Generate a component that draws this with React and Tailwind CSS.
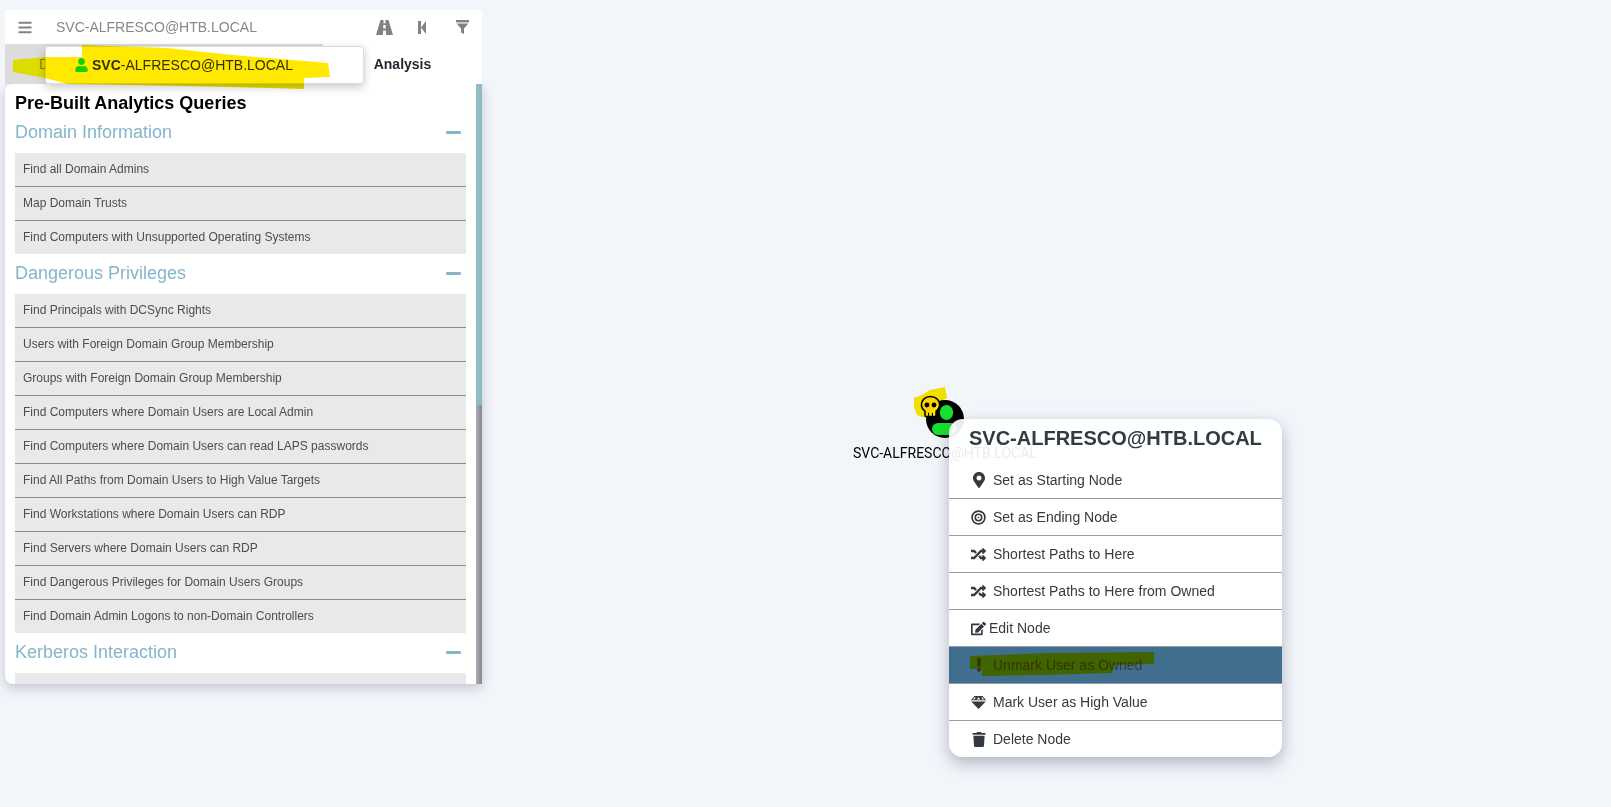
import {
  FaBars, FaUser, FaMapMarkerAlt,
  FaRandom, FaEdit, FaExclamation, FaTrash, FaMinus,
} from 'react-icons/fa';

const sections = [
  {
    title: 'Domain Information',
    rows: ['Find all Domain Admins', 'Map Domain Trusts', 'Find Computers with Unsupported Operating Systems'],
  },
  {
    title: 'Dangerous Privileges',
    rows: [
      'Find Principals with DCSync Rights',
      'Users with Foreign Domain Group Membership',
      'Groups with Foreign Domain Group Membership',
      'Find Computers where Domain Users are Local Admin',
      'Find Computers where Domain Users can read LAPS passwords',
      'Find All Paths from Domain Users to High Value Targets',
      'Find Workstations where Domain Users can RDP',
      'Find Servers where Domain Users can RDP',
      'Find Dangerous Privileges for Domain Users Groups',
      'Find Domain Admin Logons to non-Domain Controllers',
    ],
  },
  {
    title: 'Kerberos Interaction',
    rows: [''],
  },
];

const RoadIcon = ({ className }) => (
  <svg className={className} viewBox="0 0 17 15" fill="currentColor">
    <path d="M4.5 0H7.6L7.4 3.2H9.6L9.4 0H12.5L17 15H10.2L9.9 10.6H7.1L6.8 15H0L4.5 0ZM7.3 5L7.2 8.6H9.8L9.7 5H7.3Z" fillRule="evenodd" />
  </svg>
);

const BackIcon = ({ className }) => (
  <svg className={className} viewBox="0 0 8 13" fill="currentColor">
    <rect x="0" y="0" width="3" height="13" />
    <path d="M8 0V13L3 6.5Z" />
  </svg>
);

const FunnelIcon = ({ className }) => (
  <svg className={className} viewBox="0 0 13 14" fill="currentColor">
    <rect x="0" y="0" width="13" height="2.4" />
    <path d="M0.6 3.6H12.4L8 8.6V14L5 12.4V8.6Z" />
  </svg>
);

const GemIcon = ({ className }) => (
  <svg className={className} viewBox="0 0 15 13" fill="currentColor">
    <path d="M3.4 0H11.6L15 4.2H0Z" />
    <path d="M0.2 5.4H14.8L7.5 13Z" />
    <path d="M4.6 1.2L3.6 3.4H1.9L3.6 1.2ZM10.4 1.2H11.4L13.1 3.4H11.4ZM7.5 1.2L9.3 3.4H5.7Z" fill="#fff" />
  </svg>
);

const TargetIcon = ({ className }) => (
  <svg className={className} viewBox="0 0 15 15" fill="none" stroke="currentColor">
    <circle cx="7.5" cy="7.5" r="6.4" strokeWidth="1.7" />
    <circle cx="7.5" cy="7.5" r="3.2" strokeWidth="1.6" />
    <circle cx="7.5" cy="7.5" r="0.8" fill="currentColor" strokeWidth="0" />
  </svg>
);

const menuItems = [
  { label: 'Set as Starting Node', icon: FaMapMarkerAlt, size: 'h-[16px] w-[14px]' },
  { label: 'Set as Ending Node', icon: TargetIcon, size: 'h-[15px] w-[15px]' },
  { label: 'Shortest Paths to Here', icon: FaRandom, size: 'h-[15px] w-[15px]' },
  { label: 'Shortest Paths to Here from Owned', icon: FaRandom, size: 'h-[15px] w-[15px]' },
  { label: 'Edit Node', icon: FaEdit, size: 'h-[15px] w-[15px]', tight: true },
  { label: 'Unmark User as Owned', icon: FaExclamation, size: 'h-[14px] w-[14px]', active: true },
  { label: 'Mark User as High Value', icon: GemIcon, size: 'h-[13px] w-[15px]' },
  { label: 'Delete Node', icon: FaTrash, size: 'h-[15px] w-[14px]' },
];

const SearchPanel = () => (
  <div className="w-[477px] font-['Liberation_Sans',sans-serif]">
    <div className="flex h-[34px] items-center bg-white text-[#7f8289]">
      <FaBars className="ml-[13px] h-[15px] w-[14px]" />
      <div className="ml-[24px] flex-1 text-[14px] text-[#85888e]">SVC-ALFRESCO@HTB.LOCAL</div>
      <RoadIcon className="mr-[25px] h-[15px] w-[17px]" />
      <BackIcon className="mr-[30px] h-[13px] w-[8px]" />
      <FunnelIcon className="mr-[13px] h-[14px] w-[13px]" />
    </div>
    <div className="flex h-[40px] text-[14px] font-bold text-[#222831]">
      <div className="flex w-[318px] items-center bg-[#dcdcdc] pl-[34px] font-normal text-[#8a8a8a]">Database Info</div>
      <div className="flex flex-1 items-center justify-center bg-white">Analysis</div>
    </div>
    <div className="flex h-[600px] overflow-hidden rounded-l-lg bg-white shadow-[0_4px_12px_rgba(50,60,80,0.25)]">
      <div className="flex-1 overflow-hidden pl-[10px] pr-[10px]">
        <h2 className="mt-[9px] text-[18px] leading-[20px] font-bold text-black">Pre-Built Analytics Queries</h2>
        {sections.map((section) => (
          <div key={section.title}>
            <div className="flex h-[40px] items-center justify-between pb-[2px] text-[18px] text-[#85b4cd]">
              <span>{section.title}</span>
              <FaMinus className="mr-[5px] h-[17px] w-[15px]" />
            </div>
            <ul>
              {section.rows.map((row, i) => (
                <li
                  key={row}
                  className={`flex items-center bg-[#e9e9e9] pb-[1px] pl-[8px] text-[12px] text-[#4a4d55] ${i < section.rows.length - 1 ? 'h-[34px] border-b border-[#8a8a8a]' : 'h-[33px]'}`}
                >
                  {row}
                </li>
              ))}
            </ul>
          </div>
        ))}
      </div>
      {/* scrollbar */}
      <div className="flex w-[6px] flex-col">
        <div className="h-[321px] bg-[#8fbcc4]" />
        <div className="flex-1 bg-gradient-to-r from-[#a9acb2] to-[#85888e]" />
      </div>
    </div>
  </div>
);

const SearchDropdown = () => (
  <div className="absolute left-[45px] top-[46px] flex h-[38px] w-[319px] items-center rounded-[3px] border border-[#dcdcdc] bg-white pl-[29px] font-['Liberation_Sans',sans-serif] text-[14px] text-[#333] shadow-[0_3px_10px_rgba(0,0,0,0.22)]">
    <FaUser className="mr-[4px] h-[14px] w-[13px] text-[#17e625]" />
    <span><b>SVC</b>-ALFRESCO@HTB.LOCAL</span>
  </div>
);

const GraphNode = () => (
  <div className="absolute left-[853px] top-[387px] w-[184px] font-['Roboto',sans-serif]">
    <div className="absolute left-[73px] top-[13px] h-[38px] w-[38px] overflow-hidden rounded-full bg-black">
      <div className="absolute left-[14px] top-[5px] h-[15px] w-[13px] rounded-full bg-[#17e02f]" />
      <div className="absolute left-[6px] top-[23px] h-[12px] w-[25px] rounded-[6px] bg-[#17e02f]" />
    </div>
    <svg className="absolute left-[67px] top-[8px]" width="21" height="23" viewBox="0 0 22 24">
      <path
        d="M11 1.5C5.5 1.5 1.5 5.3 1.5 10c0 3 1.5 5.4 3.7 6.8V21a1.6 1.6 0 0 0 1.6 1.6h8.4a1.6 1.6 0 0 0 1.6-1.6v-4.2c2.2-1.4 3.7-3.8 3.7-6.8 0-4.7-4-8.5-9.5-8.5z"
        fill="#ffe600"
        stroke="#000"
        strokeWidth="1.6"
      />
      <circle cx="7.3" cy="10.5" r="2.6" fill="#000" />
      <circle cx="14.7" cy="10.5" r="2.6" fill="#000" />
      <path d="M9 18.5v4M13 18.5v4" stroke="#000" strokeWidth="1.2" />
    </svg>
    <div className="absolute left-0 top-[57px] whitespace-nowrap text-[14px] leading-[18px] text-black">SVC-ALFRESCO@HTB.LOCAL</div>
  </div>
);

const ContextMenu = () => (
  <div className="absolute left-[949px] top-[419px] w-[333px] overflow-hidden rounded-[14px] bg-white/[.92] font-['Liberation_Sans',sans-serif] text-[#343a40] shadow-[0_6px_16px_rgba(50,60,80,0.35)]">
    <div className="h-[43px] pl-[20px] pt-[7px] text-[20px] leading-[24px] font-bold">SVC-ALFRESCO@HTB.LOCAL</div>
    {menuItems.map((item, i) => {
      const Icon = item.icon;
      return (
        <div
          key={item.label}
          className={`flex items-center pl-[22px] text-[14px] ${i < menuItems.length - 1 ? 'h-[37px] border-b border-[#9a9ca1]' : 'h-[36px]'} ${item.active ? 'bg-[#406e8e]' : 'bg-white'}`}
        >
          <span className={`flex items-center justify-center ${item.tight ? 'mr-[3px] w-[15px]' : 'mr-[7px] w-[15px]'}`}>
            <Icon className={item.size} />
          </span>
          {item.label}
        </div>
      );
    })}
  </div>
);

const Scribbles = () => (
  <svg className="pointer-events-none absolute left-0 top-0 mix-blend-multiply" width="1611" height="807">
    <polygon fill="#ffff00" points="13,60 45,57 45,78 13,72" />
    <polygon fill="#ffe900" points="45,57 82,57 82,45 167,48 233,55 328,63 330,77 304,78 304,84 68,84 45,78" />
    <polygon fill="#e2dd00" points="68,84 304,84 304,89 233,87 133,85" />
    <polygon fill="#ffe900" points="914,398 922,395 930,390 945,387 947,398 940,402 925,418 917,415 914,407" />
    <polygon
      fill="#ffe900"
      points="970,656 1050,653 1154,652 1154,664 1114,665 1112,673 1040,675 982,676 982,669 970,669"
    />
  </svg>
);

const App = () => (
  <div className="relative h-[807px] w-[1611px] overflow-hidden bg-[#f2f5fa] pl-[5px] pt-[10px]">
    <SearchPanel />
    <SearchDropdown />
    <GraphNode />
    <ContextMenu />
    <Scribbles />
  </div>
);

export default App;
